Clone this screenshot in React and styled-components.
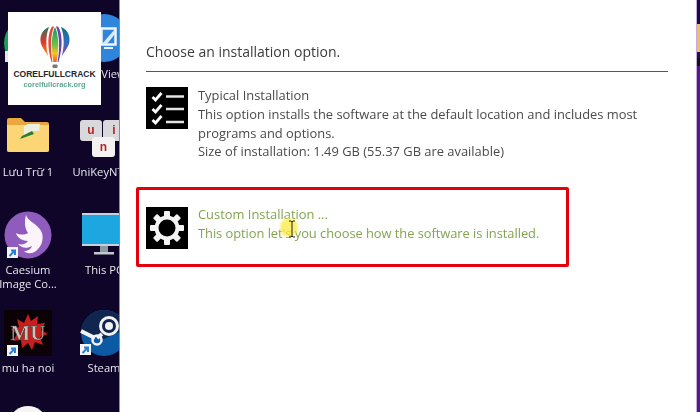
import React from "react";
import styled, { createGlobalStyle } from "styled-components";

const Global = createGlobalStyle`
  html, body { margin: 0; padding: 0; width: 700px; height: 412px; overflow: hidden; background: #fff; }
  #root { width: 700px; height: 412px; }
`;

const Screen = styled.div`
  position: relative;
  display: flex;
  width: 700px;
  height: 412px;
  font-family: "Open Sans", "Noto Sans", sans-serif;
`;

const Desktop = styled.div`
  position: relative;
  flex: 0 0 120px;
  box-sizing: border-box;
  height: 412px;
  overflow: hidden;
  background: #0f0528;
  border-right: 1px solid #8d8d94;
`;

const IconGrid = styled.div`
  display: grid;
  grid-template-columns: 76px 76px;
  grid-auto-rows: 98px;
  width: 152px;
  margin-left: -10px;
  padding-top: 15px;
`;

const DesktopItem = styled.div`
  display: flex;
  flex-direction: column;
  align-items: center;
  min-width: 0;
`;

const IconSlot = styled.svg`
  flex: 0 0 48px;
  width: 48px;
  height: 48px;
  overflow: visible;
  filter: blur(0.5px);
`;

const DesktopLabel = styled.div`
  margin-top: 4px;
  margin-left: ${(p) => p.$shift || 0}px;
  margin-right: ${(p) => p.$pull || 0}px;
  color: #e6e6ec;
  font-size: 11.2px;
  line-height: 14px;
  text-align: center;
  white-space: nowrap;
  filter: blur(0.3px);
`;

const LogoCard = styled.div`
  position: absolute;
  left: 8px;
  top: 12px;
  width: 93px;
  height: 93px;
  background: #fff;
  display: flex;
  flex-direction: column;
  align-items: center;
`;

const Balloon = styled.svg`
  flex: 0 0 44px;
  width: 32px;
  height: 44px;
  margin-top: 13px;
  filter: blur(0.5px);
`;

const LogoName = styled.div`
  color: #26262c;
  font-family: "Liberation Sans", sans-serif;
  font-size: 8.5px;
  line-height: 11px;
  font-weight: 700;
  white-space: nowrap;
`;

const LogoUrl = styled.div`
  color: #5fa78b;
  font-family: "Liberation Sans", sans-serif;
  font-size: 7.4px;
  line-height: 10px;
  font-weight: 700;
  white-space: nowrap;
  filter: blur(0.3px);
`;

const Panel = styled.main`
  flex: 1;
  min-width: 0;
  padding: 42px 28px 0 26px;
  background: #fff;
  filter: blur(0.25px);
`;

const Heading = styled.h1`
  margin: 0 0 15px;
  padding-bottom: 9px;
  border-bottom: 1px solid #55555a;
  color: #3b3b3f;
  font-size: 14px;
  line-height: 20px;
  font-weight: 400;
`;

const Option = styled.section`
  display: flex;
  gap: 10px;
  color: ${(p) => p.$color};
  font-size: 12.9px;
  line-height: 18.8px;
`;

const OptionIcon = styled.svg`
  flex: 0 0 42px;
  width: 42px;
  height: 42px;
  background: #000;
`;

const OptionText = styled.div`
  white-space: nowrap;
  margin-top: ${(p) => p.$top || 0}px;
`;

const Line = styled.div`
  white-space: nowrap;
  letter-spacing: ${(p) => p.$spacing || 0}px;
`;

const Highlight = styled.div`
  box-sizing: border-box;
  margin: 26px 0 0 -10px;
  width: 433px;
  height: 80px;
  border: 3px solid #e2000f;
  border-radius: 2px;
  padding: 17px 0 0 7px;
`;

const Cursor = styled.div`
  position: absolute;
  left: 280px;
  top: 218px;
  width: 18px;
  height: 19px;
  border-radius: 50%;
  background: rgba(250, 235, 60, 0.75);
  filter: blur(1px);
`;

const CursorBeam = styled.svg`
  position: absolute;
  left: 288px;
  top: 220px;
  width: 8px;
  height: 18px;
`;

const Strip = styled.div`
  flex: 0 0 4px;
  height: 412px;
  background: linear-gradient(
    to bottom,
    #1a0a46 0, #1a0a46 24px,
    #f0c060 24px, #f0c060 52px,
    #24104e 52px, #24104e 58px,
    #111 58px, #111 66px,
    #501a8c 66px, #501a8c 412px
  );
  box-shadow: inset 1px 0 0 #c4aade;
`;

const arrow = (x, y) => (
  <>
    <rect x={x} y={y} width="11" height="11" fill="#f3f5f8" />
    <path d={`M${x + 2.5} ${y + 9}l5-5M${x + 4} ${y + 3.5}h4V${y + 8}`} stroke="#2a7fd0" strokeWidth="2" fill="none" />
  </>
);

const gearTeeth = [0, 45, 90, 135, 180, 225, 270, 315];

function BalloonArt() {
  return (
    <Balloon viewBox="0 0 32 44">
      <defs>
        <linearGradient id="mid" x1="0" y1="0" x2="0" y2="1">
          <stop offset="0" stopColor="#0d9c63" />
          <stop offset="0.5" stopColor="#6cc04a" />
          <stop offset="0.75" stopColor="#f8c51f" />
          <stop offset="1" stopColor="#ea5d22" />
        </linearGradient>
        <linearGradient id="lft" x1="0" y1="0" x2="0" y2="1">
          <stop offset="0" stopColor="#1f7d66" />
          <stop offset="0.5" stopColor="#e5352b" />
          <stop offset="1" stopColor="#f0a020" />
        </linearGradient>
        <linearGradient id="rgt" x1="0" y1="0" x2="0" y2="1">
          <stop offset="0" stopColor="#14707f" />
          <stop offset="0.5" stopColor="#2e6fc0" />
          <stop offset="1" stopColor="#9a3fa8" />
        </linearGradient>
      </defs>
      <path d="M16 1C7 1 1 8 1 16c0 7 7 13 10 22h10c3-9 10-15 10-22C31 8 25 1 16 1z" fill="#fff" />
      <path d="M10 2C4 4 1 10 1.500 16c.5 6 5 10 8 16-3-10-3-21 .5-30z" fill="url(#lft)" />
      <path d="M22 2c6 2 9 8 8.500 14-.5 6-5 10-8 16 3-10 3-21-.5-30z" fill="url(#rgt)" />
      <path d="M13 1.500C8.500 8 8 22 12.500 37h1C11 24 11.500 10 15 1.500z" fill="#e04a36" />
      <path d="M19 1.500c4.500 6.500 5 20.500.5 35.500h-1c2.500-13 2-27-1.500-35.500z" fill="#6a3fb0" />
      <path d="M16 2c-3.500 7-4.500 22-1.500 35h3c3-13 2-28-1.500-35z" fill="url(#mid)" />
      <rect x="13.500" y="39.500" width="5" height="3.500" rx="1" fill="#77777c" />
    </Balloon>
  );
}

export default function App() {
  return (
    <Screen>
      <Global />
      <Desktop>
        <IconGrid>
          <DesktopItem>
            <IconSlot viewBox="0 0 48 48">
              <circle cx="24" cy="28" r="24" fill="#1b9e57" />
              <rect x="1" y="36" width="11" height="11" fill="#e4e6ea" />
            </IconSlot>
          </DesktopItem>
          <DesktopItem>
            <IconSlot viewBox="0 0 48 48">
              <circle cx="24" cy="23" r="24" fill="#2f84dc" />
              <rect x="21.500" y="13.500" width="14" height="16" fill="none" stroke="#eef5fc" strokeWidth="2.500" />
              <path d="M22 29l13-15v5l-8 10z" fill="#dbe9f8" />
              <rect x="24" y="32" width="9" height="2" fill="#eef5fc" />
            </IconSlot>
            <DesktopLabel $shift={19}>View</DesktopLabel>
          </DesktopItem>

          <DesktopItem>
            <IconSlot viewBox="0 0 48 48">
              <path d="M3 7a2 2 0 0 1 2-2h12l4 4h22a2 2 0 0 1 2 2v26a2 2 0 0 1-2 2H5a2 2 0 0 1-2-2z" fill="#e9a73e" />
              <path d="M3 12h42v25a2 2 0 0 1-2 2H5a2 2 0 0 1-2-2z" fill="#fcd575" />
              <path d="M20 13l4-2h12l-1 7h-7l-8 4z" fill="#eef0df" />
              <path d="M18 23l10-5 2 3-14 5z" fill="#2e7d36" />
            </IconSlot>
            <DesktopLabel>Lưu Trữ 1</DesktopLabel>
          </DesktopItem>
          <DesktopItem>
            <IconSlot viewBox="0 0 48 48">
              <rect x="0" y="7" width="22" height="21" rx="3" fill="#d9d9dc" />
              <rect x="23" y="7" width="22" height="21" rx="3" fill="#d9d9dc" />
              <rect x="12" y="24" width="23" height="20" rx="3" fill="#f2f2f2" />
              <text x="11" y="21" fontSize="12" fontWeight="700" fill="#b6252a" textAnchor="middle" fontFamily="Liberation Sans">u</text>
              <text x="34" y="21" fontSize="12" fontWeight="700" fill="#b6252a" textAnchor="middle" fontFamily="Liberation Sans">i</text>
              <text x="23.500" y="38" fontSize="12" fontWeight="700" fill="#b6252a" textAnchor="middle" fontFamily="Liberation Sans">n</text>
            </IconSlot>
            <DesktopLabel $pull={12}>UniKeyNT</DesktopLabel>
          </DesktopItem>

          <DesktopItem>
            <IconSlot viewBox="0 0 48 48">
              <circle cx="24" cy="24" r="23.500" fill="#8f5bbd" />
              <path d="M22 4c2 7 13 9 16 18 2 7-1 14-6 18-4 3-9 3-12 0 4 0 7-2 8-5-5 3-11 2-14-2 4 1 8 0 10-3-5 0-11-3-12-8 4 2 9 2 12 0-3-4-4-11-2-18z" fill="#fbf5fb" />
              {arrow(3, 36)}
            </IconSlot>
            <DesktopLabel>Caesium<br />Image Co...</DesktopLabel>
          </DesktopItem>
          <DesktopItem>
            <IconSlot viewBox="0 0 48 48">
              <rect x="2" y="2" width="46" height="33" fill="#1ca7e0" />
              <path d="M2 2h46v2H2zM2 33h46v2H2z" fill="#c8d0d8" />
              <rect x="20" y="35" width="8" height="7" fill="#8e98a2" />
              <rect x="14" y="41" width="20" height="2.500" fill="#c0c8d0" />
            </IconSlot>
            <DesktopLabel>This PC</DesktopLabel>
          </DesktopItem>

          <DesktopItem>
            <IconSlot viewBox="0 0 48 48">
              <rect y="1" width="48" height="46" fill="#0a0206" />
              <path d="M24 5l3 7 7-5-1 8 8-1-4 7 7 4-8 3 3 8-8-3-3 8-4-7-6 5-1-8-8 1 4-7-6-5 8-2-2-8 7 4z" fill="#c81e1e" />
              <text x="24" y="31" fontSize="21" fontWeight="700" fill="#c9c4b6" stroke="#3a3a3a" strokeWidth="0.500" textAnchor="middle" fontFamily="Liberation Serif">MU</text>
              {arrow(3, 36)}
            </IconSlot>
            <DesktopLabel>mu ha noi</DesktopLabel>
          </DesktopItem>
          <DesktopItem>
            <IconSlot viewBox="0 0 48 48">
              <circle cx="24" cy="24" r="23" fill="#0c5aa4" />
              <path d="M24 1A23 23 0 0 0 1 22l13 6 10 2 22-10A23 23 0 0 0 24 1z" fill="#11264e" />
              <circle cx="29" cy="17" r="8.500" fill="none" stroke="#f2f2f2" strokeWidth="3" />
              <circle cx="29" cy="17" r="4" fill="#f2f2f2" />
              <path d="M1 22l14 7M22 25l-5 4" stroke="#f2f2f2" strokeWidth="4" />
              <circle cx="17" cy="31" r="4.500" fill="none" stroke="#f2f2f2" strokeWidth="2.500" />
              {arrow(0, 35)}
            </IconSlot>
            <DesktopLabel>Steam</DesktopLabel>
          </DesktopItem>

          <DesktopItem>
            <IconSlot viewBox="0 0 48 48">
              <ellipse cx="24" cy="13" rx="17" ry="14" fill="#f5f5f5" />
            </IconSlot>
          </DesktopItem>
        </IconGrid>

        <LogoCard>
          <BalloonArt />
          <LogoName>CORELFULLCRACK</LogoName>
          <LogoUrl>corelfullcrack.org</LogoUrl>
        </LogoCard>
      </Desktop>

      <Panel>
        <Heading>Choose an installation option.</Heading>
        <Option $color="#4a4a4e">
          <OptionIcon viewBox="0 0 42 42">
            <g fill="none">
              <path d="M6.500 10l3 3 6-7M6.500 22l3 3 6-7M6.500 33l3 3 6-7" stroke="#fff" strokeWidth="2.800" />
              <path d="M20 9.500h18M20 22h18M20 35h18" stroke="#e4e4e4" strokeWidth="2.600" />
            </g>
          </OptionIcon>
          <OptionText $top={-1}>
            <Line>Typical Installation</Line>
            <Line>This option installs the software at the default location and includes most</Line>
            <Line>programs and options.</Line>
            <Line>Size of installation: 1.49 GB (55.37 GB are available)</Line>
          </OptionText>
        </Option>
        <Highlight>
          <Option $color="#84a352">
            <OptionIcon viewBox="0 0 42 42">
              <g fill="#f4f4f4">
                {gearTeeth.map((a) => (
                  <rect key={a} x="18" y="4" width="6" height="7" rx="1" transform={`rotate(${a} 21 21)`} />
                ))}
              </g>
              <circle cx="21" cy="21" r="10.500" fill="none" stroke="#f4f4f4" strokeWidth="4" />
            </OptionIcon>
            <OptionText $top={-2}>
              <Line>Custom Installation ...</Line>
              <Line $spacing={-0.05}>This option let's you choose how the software is installed.</Line>
            </OptionText>
          </Option>
        </Highlight>
      </Panel>
      <Strip />
      <Cursor />
      <CursorBeam viewBox="0 0 8 18">
        <path d="M1 1h2l1 1 1-1h2M4 2v14M1 17h2l1-1 1 1h2" stroke="#222" strokeWidth="1" fill="none" />
      </CursorBeam>
    </Screen>
  );
}
